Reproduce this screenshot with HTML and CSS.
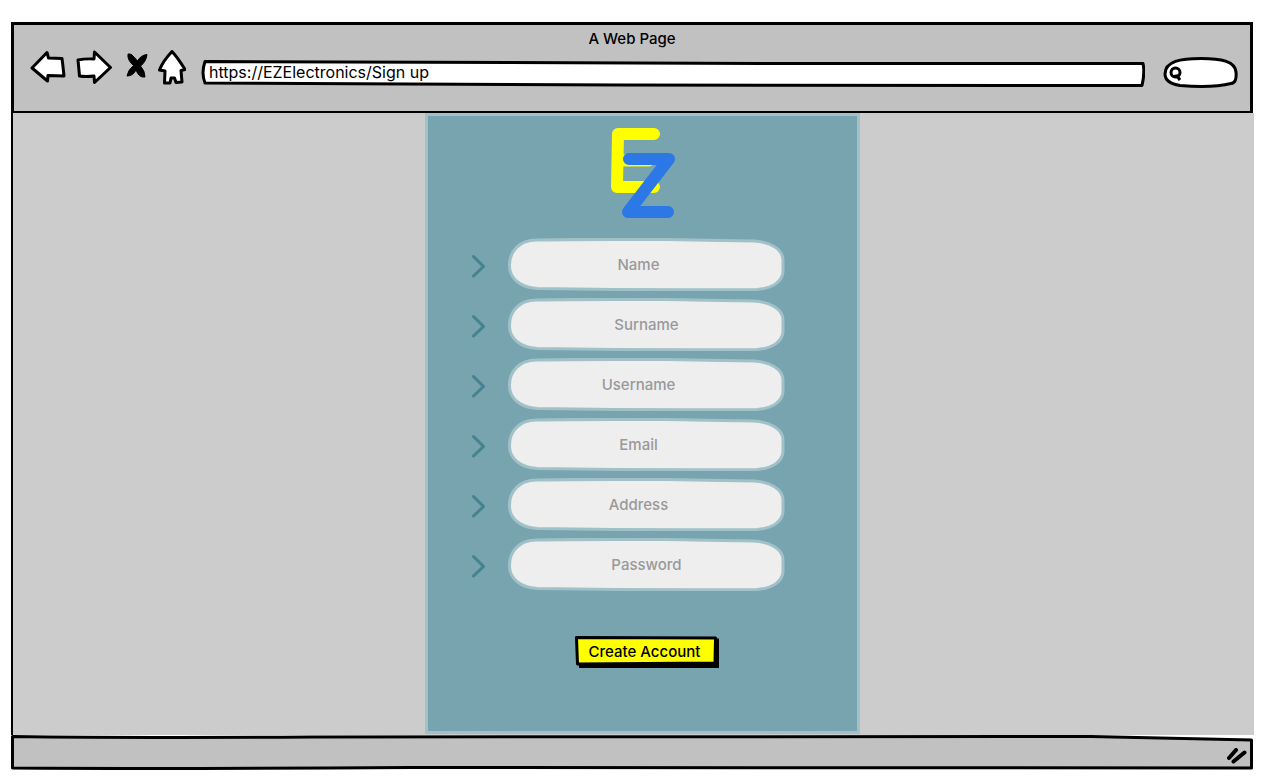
FILE: index.html
```html
<!DOCTYPE html>
<html lang="en">
<head>
<meta charset="utf-8">
<meta name="viewport" content="width=device-width, initial-scale=1">
<title>A Web Page</title>
<link rel="stylesheet" href="styles.css">
</head>
<body>
<svg class="defs" aria-hidden="true">
  <symbol id="pill" viewBox="0 0 277 53" preserveAspectRatio="none">
    <path d="M28 2C70 1 120 1.500 160 1.500C190 2 215 2.500 246 3C262 4 275 11 275 22V34C274 44 264 50.500 249 51.500C180 52 90 51.500 29 50.500C13 49.500 1.500 41 1.500 28C1 13 12 2 28 2Z"/>
  </symbol>
  <symbol id="chevron" viewBox="0 0 13 24">
    <path d="M1.500 2.500L11.500 12.500L1.500 22"/>
  </symbol>
</svg>

<header class="chrome">
  <div class="title">A Web Page</div>
  <div class="toolbar">
    <button class="tool back" type="button" aria-label="Back">
      <svg width="36" height="34" viewBox="0 0 36 34"><path d="M2 18L17 2.500L18.500 8L32 8.500Q33 16 34 26L18 25.500L17.500 31Z"/></svg>
    </button>
    <button class="tool forward" type="button" aria-label="Forward">
      <svg width="36" height="34" viewBox="0 0 36 34"><path d="M2 10Q9 8.500 18 9L18.500 2L34.500 17.500L18.500 32.500L18 26Q10 27 3.500 26Z"/></svg>
    </button>
    <button class="tool stop" type="button" aria-label="Stop">
      <svg width="22" height="26" viewBox="0 0 22 26"><path class="solid" d="M2 1Q5 0 8 4L11.500 8Q15 2 21 1.500Q20 9 14.500 13Q19 18 19 24Q13 25 10 17Q7 23 1 23Q2 17 7.500 12.500Q1 7 2 1Z"/></svg>
    </button>
    <button class="tool home" type="button" aria-label="Home">
      <svg width="28" height="36" viewBox="0 0 28 36"><path d="M14 1.500Q20 8 27 19.500L23 20.500L24 32L18 32.500L16.500 28L13 28L12 33L6.500 33L7 21L1.500 20Q5 11 14 1.500Z"/></svg>
    </button>
    <label class="address">
      <svg class="sketch" viewBox="0 0 943 29" preserveAspectRatio="none" aria-hidden="true"><path d="M4 2.500Q300 3 560 4.500L941 4.500Q943 14 940 26.500Q600 27 420 26L4 24Q0 14 4 2.500Z"/></svg>
      <input type="text" aria-label="Address bar" value="https://EZElectronics/Sign up">
    </label>
    <label class="search">
      <svg class="sketch" viewBox="0 0 75 31" preserveAspectRatio="none" aria-hidden="true"><path d="M2 17C2 4 18 1.500 38 1.500C58 1.500 72 4 73 15Q74 26 68 26.500Q50 31 17 28.500Q2 26 2 17Z"/><path class="lens" d="M17 15.500A4.500 4.500 0 1 0 8 15.500A4.500 4.500 0 1 0 17 15.500M11 19.500L16 18.500M14 19L17 23"/></svg>
      <input type="search" aria-label="Search">
    </label>
  </div>
</header>

<main class="page">
  <section class="panel">
    <svg class="logo" width="64" height="90" viewBox="0 0 64 90" role="img" aria-label="EZ">
      <g class="logo-e"><polyline points="43,6 7,6 6,59 43,59"/><line x1="8" y1="32.500" x2="38" y2="32.500"/></g>
      <polyline class="logo-z" points="18,31 58,31 17,84 57,84"/>
    </svg>
    <form class="signup">
      <div class="row">
        <svg class="chevron" aria-hidden="true"><use href="#chevron"/></svg>
        <label class="field"><svg class="sketch" aria-hidden="true"><use href="#pill"/></svg><input type="text" placeholder="Name" aria-label="Name"></label>
      </div>
      <div class="row">
        <svg class="chevron" aria-hidden="true"><use href="#chevron"/></svg>
        <label class="field centered"><svg class="sketch" aria-hidden="true"><use href="#pill"/></svg><input type="text" placeholder="Surname" aria-label="Surname"></label>
      </div>
      <div class="row">
        <svg class="chevron" aria-hidden="true"><use href="#chevron"/></svg>
        <label class="field"><svg class="sketch" aria-hidden="true"><use href="#pill"/></svg><input type="text" placeholder="Username" aria-label="Username"></label>
      </div>
      <div class="row">
        <svg class="chevron" aria-hidden="true"><use href="#chevron"/></svg>
        <label class="field"><svg class="sketch" aria-hidden="true"><use href="#pill"/></svg><input type="email" placeholder="Email" aria-label="Email"></label>
      </div>
      <div class="row">
        <svg class="chevron" aria-hidden="true"><use href="#chevron"/></svg>
        <label class="field"><svg class="sketch" aria-hidden="true"><use href="#pill"/></svg><input type="text" placeholder="Address" aria-label="Address"></label>
      </div>
      <div class="row">
        <svg class="chevron" aria-hidden="true"><use href="#chevron"/></svg>
        <label class="field centered"><svg class="sketch" aria-hidden="true"><use href="#pill"/></svg><input type="password" placeholder="Password" aria-label="Password"></label>
      </div>
      <div class="actions">
        <button class="create" type="submit">
          <svg class="sketch" viewBox="0 0 144 32" preserveAspectRatio="none" aria-hidden="true"><path class="shade" d="M4 4L144 2.500V32H4Z"/><path class="face" d="M1.500 1.500L140.500 2L140 27L2.500 28Z"/></svg>
          <span>Create Account</span>
        </button>
      </div>
    </form>
  </section>
</main>

<footer class="status">
  <svg class="sketch" viewBox="0 0 1242 35" preserveAspectRatio="none" aria-hidden="true"><path d="M1.500 1.500Q120 3 300 2L1080 1.500L1240.500 5V33Q700 34 400 32.500Q150 34 1.500 33Z"/></svg>
  <svg class="grip" width="20" height="16" viewBox="0 0 20 16" aria-hidden="true"><path d="M2 10L9 2M6.500 13.500L17.500 4.500"/></svg>
</footer>
</body>
</html>
```
FILE: styles.css
```css
* {
  box-sizing: border-box;
}

body {
  margin: 0;
  min-height: 100vh;
  padding: 22px 9px 9px 11px;
  display: flex;
  flex-direction: column;
  background: #fff;
  color: #000;
  font: 500 15px/20px Inter, "Liberation Sans", Arial, sans-serif;
}

input,
button {
  font: inherit;
  color: inherit;
  margin: 0;
  padding: 0;
  border: 0;
  background: none;
  outline-offset: -2px;
}

svg {
  display: block;
}

.defs {
  position: absolute;
  width: 0;
  height: 0;
}

/* hand-drawn outline behind a control */
.sketch {
  position: absolute;
  inset: 0;
  width: 100%;
  height: 100%;
  fill: #fff;
  stroke: #000;
  stroke-width: 3px;
  stroke-linejoin: round;
}

.chrome {
  margin-right: 1px;
  padding-top: 4px;
  height: 91px;
  border: 3px solid #000;
  border-bottom-width: 2px;
  background: #c1c1c1;
}

.title {
  text-align: center;
}

.toolbar {
  display: flex;
  align-items: flex-start;
  padding: 0 12px 0 16px;
}

.tool {
  flex: none;
  margin-top: 1px;
}

.tool path {
  fill: #fff;
  stroke: #000;
  stroke-width: 3px;
  stroke-linejoin: round;
}

.tool .solid {
  stroke-width: 1px;
  fill: #000;
}

.forward {
  margin-left: 10px;
}

.stop {
  margin: 4px 0 0 14px;
}

.home {
  margin-left: 10px;
}

.address {
  position: relative;
  flex: 1;
  height: 29px;
  margin: 10px 18px 0 15px;
  padding: 2px 8px;
  font-size: 16px;
  font-weight: 400;
}

.address input,
.search input {
  position: relative;
  display: block;
  width: 100%;
  height: 22px;
}

.search {
  position: relative;
  flex: none;
  width: 75px;
  height: 31px;
  margin-top: 8px;
  padding: 4px 8px 4px 20px;
}

.lens {
  fill: none;
}

.page {
  flex: 1;
  display: flex;
  justify-content: center;
  padding: 0 0 1px 18px;
  border-left: 2px solid #000;
  background: #ccc;
}

.panel {
  width: 435px;
  padding-top: 12px;
  border: 3px solid #a0c1c7;
  background: #77a4af;
}

.logo {
  margin: 0 auto 20px;
  fill: none;
  stroke-width: 12px;
  stroke-linecap: round;
  stroke-linejoin: round;
}

.logo-e {
  stroke: #ff0;
}

.logo-z {
  stroke: #2c78e6;
}

.signup {
  display: flex;
  flex-direction: column;
  gap: 7px;
  padding: 0 72px 0 44px;
}

.row {
  display: flex;
  align-items: center;
  gap: 23px;
}

.chevron {
  flex: none;
  width: 13px;
  height: 24px;
  margin-top: 2px;
  fill: none;
  stroke: #45828f;
  stroke-width: 3px;
  stroke-linecap: round;
  stroke-linejoin: round;
}

.field {
  position: relative;
  flex: 1;
  height: 53px;
  padding: 2px 24px 2px 8px;
}

.field.centered {
  padding-right: 8px;
}

.field .sketch {
  fill: #eee;
  stroke: #a0c1c7;
}

.field input {
  position: relative;
  display: block;
  width: 100%;
  height: 48px;
  text-align: center;
}

.field input::placeholder {
  color: #999;
  opacity: 1;
}

.actions {
  display: flex;
  justify-content: center;
  margin-top: 38px;
  padding-left: 36px;
}

.create {
  position: relative;
  width: 144px;
  height: 32px;
  padding: 0 4px 0 0;
}

.create span {
  position: relative;
}

.create .shade {
  fill: #000;
  stroke: none;
}

.create .face {
  fill: #ff0;
}

.status {
  position: relative;
  display: flex;
  justify-content: flex-end;
  align-items: flex-end;
  height: 35px;
  margin-right: 1px;
  padding: 0 6px 6px;
}

.status .sketch {
  fill: #c1c1c1;
}

.grip {
  position: relative;
  fill: none;
  stroke: #000;
  stroke-width: 4px;
  stroke-linecap: round;
}
```
